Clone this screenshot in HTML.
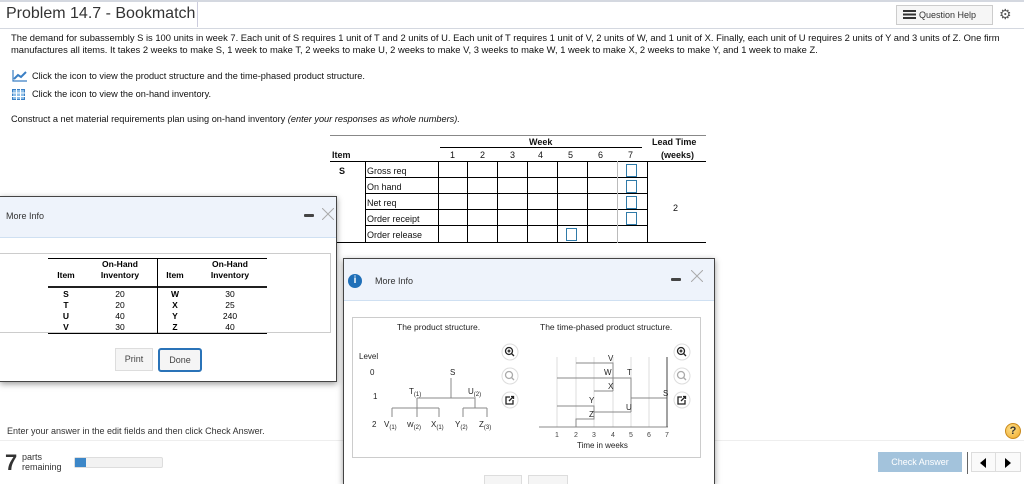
<!DOCTYPE html>
<html><head><meta charset="utf-8"><style>
*{margin:0;padding:0;box-sizing:border-box}
html,body{width:1024px;height:484px;overflow:hidden}
body{background:#fff;font-family:"Liberation Sans",sans-serif;color:#111;position:relative}
.a{position:absolute;white-space:nowrap}
.t{font-size:9px}
</style></head><body>
<div class="a" style="left:0;top:0;width:1024px;height:2px;background:#d4d8e0"></div>
<div class="a" style="left:6px;top:5px;font-size:16px;color:#333">Problem 14.7 - Bookmatch</div>
<div class="a" style="left:197px;top:2px;width:1px;height:25px;background:#ccd"></div>
<div class="a" style="left:0;top:28px;width:1024px;height:1px;background:#d4d8e0"></div>
<div class="a" style="left:896px;top:5px;width:97px;height:20px;border:1px solid #ccc;background:#f6f6f6;font-size:9px;padding:4px 0 0 6px;color:#333"><span style="display:inline-block;width:13px;height:9px;vertical-align:-1px;background:repeating-linear-gradient(#333 0 2px,transparent 2px 3.5px);margin-right:3px"></span>Question Help</div>
<div class="a" style="left:999px;top:6px;font-size:14px;color:#555">⚙</div>
<div class="a" style="left:11px;top:33px;font-size:9.38px">The demand for subassembly S is 100 units in week 7. Each unit of S requires 1 unit of T and 2 units of U. Each unit of T requires 1 unit of V, 2 units of W, and 1 unit of X. Finally, each unit of U requires 2 units of Y and 3 units of Z. One firm</div>
<div class="a" style="left:11px;top:45px;font-size:9.38px">manufactures all items. It takes 2 weeks to make S, 1 week to make T, 2 weeks to make U, 2 weeks to make V, 3 weeks to make W, 1 week to make X, 2 weeks to make Y, and 1 week to make Z.</div>
<svg class="a" style="left:12px;top:70px" width="16" height="12"><path d="M1 0V11H15" stroke="#3a7fc4" fill="none" stroke-width="1.2"/><path d="M2 9L6 5L9 7L14 2" stroke="#3a7fc4" fill="none" stroke-width="2"/></svg>
<div class="a" style="left:32px;top:71px;font-size:9.2px">Click the icon to view the product structure and the time-phased product structure.</div>
<svg class="a" style="left:12px;top:89px" width="13" height="11"><rect x="0.5" y="0.5" width="12" height="10" fill="#8ebfe8" stroke="#3a7fc4"/><path d="M0 4H13M0 7.5H13M4.5 0V11M8.5 0V11" stroke="#fff" stroke-width="1"/></svg>
<div class="a" style="left:32px;top:89px;font-size:9.2px">Click the icon to view the on-hand inventory.</div>
<div class="a" style="left:11px;top:114px;font-size:9.2px">Construct a net material requirements plan using on-hand inventory <i>(enter your responses as whole numbers).</i></div>

<div class="a" style="left:330px;top:135px;width:376px;height:1px;background:#888"></div>
<div class="a" style="left:529px;top:137px;font-size:9px;font-weight:bold">Week</div>
<div class="a" style="left:652px;top:137px;font-size:9px;font-weight:bold">Lead Time</div>
<div class="a" style="left:440px;top:147px;width:202px;height:1px;background:#000"></div>
<div class="a" style="left:332px;top:150px;font-size:9px;font-weight:bold">Item</div>
<div class="a" style="left:661px;top:150px;font-size:9px;font-weight:bold">(weeks)</div>
<div class="a" style="left:450px;top:150px;font-size:9px;width:200px">
<span class="a" style="left:0">1</span><span class="a" style="left:30px">2</span><span class="a" style="left:60px">3</span><span class="a" style="left:88px">4</span><span class="a" style="left:118px">5</span><span class="a" style="left:148px">6</span><span class="a" style="left:178px">7</span></div>
<div class="a" style="left:330px;top:161px;width:376px;height:1px;background:#000"></div>
<div class="a" style="left:330px;top:242px;width:376px;height:1px;background:#000"></div>
<div class="a" style="left:339px;top:166px;font-size:9px;font-weight:bold">S</div>
<div class="a" style="left:673px;top:203px;font-size:9px">2</div>
<svg class="a" style="left:365px;top:161px" width="283" height="82">
<g stroke="#000" stroke-width="1" fill="none">
<path d="M0.5 0V82M73.5 0V82M102.5 0V82M132.5 0V82M162.5 0V82M192.5 0V82M222.5 0V82M282.5 0V82"/>
<path d="M0 16.5H282M0 32.5H282M0 48.5H282M0 64.5H282"/>
</g>
<path d="M252.5 0V82" stroke="#bbb"/>
<g fill="#fff" stroke="#2f7aa8"><rect x="261.5" y="3.5" width="10" height="12"/><rect x="261.5" y="19.5" width="10" height="12"/><rect x="261.5" y="35.5" width="10" height="12"/><rect x="261.5" y="51.5" width="10" height="12"/><rect x="201.5" y="67.5" width="10" height="12"/></g>
</svg>
<div class="a t" style="left:367px;top:166px">Gross req</div>
<div class="a t" style="left:367px;top:182px">On hand</div>
<div class="a t" style="left:367px;top:198px">Net req</div>
<div class="a t" style="left:367px;top:214px">Order receipt</div>
<div class="a t" style="left:367px;top:230px">Order release</div>

<div class="a" style="left:7px;top:426px;font-size:9px;color:#333">Enter your answer in the edit fields and then click Check Answer.</div>
<div class="a" style="left:0;top:440px;width:1024px;height:1px;background:#eee"></div>
<div class="a" style="left:5px;top:450px;font-size:22px;font-weight:bold;color:#333">7</div>
<div class="a" style="left:22px;top:452px;font-size:9px;line-height:10px;color:#333">parts<br>remaining</div>
<div class="a" style="left:74px;top:457px;width:89px;height:11px;border:1px solid #ddd;border-radius:2px;background:#f2f2f2"><div style="width:11px;height:9px;background:#3c87c8"></div></div>
<div class="a" style="left:878px;top:452px;width:84px;height:20px;background:#a3c3dc;color:#fff;font-size:9px;text-align:center;line-height:20px">Check Answer</div>
<div class="a" style="left:967px;top:452px;width:1px;height:22px;background:#666"></div>
<div class="a" style="left:971px;top:452px;width:50px;height:20px;border:1px solid #ddd;background:#fafafa"></div>
<div class="a" style="left:995px;top:453px;width:1px;height:18px;background:#ddd"></div>
<svg class="a" style="left:977px;top:457px" width="40" height="12"><path d="M3 6L9 1V11Z M28 1V11L34 6Z" fill="#000"/></svg>
<div class="a" style="left:1005px;top:423px;width:16px;height:16px;border-radius:50%;background:radial-gradient(circle at 40% 35%,#fde08a,#f0a92a);border:1px solid #c98a1c;font-size:11px;font-weight:bold;text-align:center;line-height:14px;color:#333">?</div>

<div class="a" style="left:0;top:196px;width:337px;height:186px;background:#fff;border:1px solid #444;border-left:none;box-shadow:0 2px 6px rgba(0,0,0,.4)">
<div style="height:41px;background:#eef3fb;border-bottom:1px solid #cfe0f2"></div>
</div>
<div class="a" style="left:6px;top:211px;font-size:9px;color:#333">More Info</div>
<div class="a" style="left:304px;top:214px;width:10px;height:3px;background:#444;border-radius:1px"></div>
<svg class="a" style="left:322px;top:208px" width="12" height="12"><path d="M0 0L12 12M12 0L0 12" stroke="#aaa" stroke-width="1"/></svg>
<div class="a" style="left:0;top:253px;width:331px;height:80px;border:1px solid #ccc;border-left:none"></div>
<svg class="a" style="left:48px;top:258px" width="220" height="76" font-family="Liberation Sans" font-size="8.5" text-anchor="middle">
<path d="M0 .5H219M0 75.5H219" stroke="#000" stroke-width="1"/><path d="M0 29H219" stroke="#000" stroke-width="1.8"/>
<path d="M109.5 0V76" stroke="#000"/>
<g font-weight="bold"><text x="72" y="9">On-Hand</text><text x="72" y="20">Inventory</text><text x="18" y="20">Item</text><text x="182" y="9">On-Hand</text><text x="182" y="20">Inventory</text><text x="127" y="20">Item</text>
<text x="18" y="39">S</text><text x="18" y="50">T</text><text x="18" y="61">U</text><text x="18" y="72">V</text>
<text x="127" y="39">W</text><text x="127" y="50">X</text><text x="127" y="61">Y</text><text x="127" y="72">Z</text></g>
<text x="72" y="39">20</text><text x="72" y="50">20</text><text x="72" y="61">40</text><text x="72" y="72">30</text>
<text x="182" y="39">30</text><text x="182" y="50">25</text><text x="182" y="61">240</text><text x="182" y="72">40</text>
</svg>
<div class="a" style="left:115px;top:348px;width:38px;height:23px;border:1px solid #ddd;background:#f5f5f5;font-size:9px;color:#444;text-align:center;line-height:21px">Print</div>
<div class="a" style="left:158px;top:348px;width:44px;height:24px;border:2px solid #2a73b8;border-radius:3px;background:#f5f5f5;font-size:9px;color:#444;text-align:center;line-height:20px">Done</div>

<div class="a" style="left:343px;top:258px;width:372px;height:226px;background:#fff;border:1px solid #444;border-bottom:none;box-shadow:0 2px 6px rgba(0,0,0,.4);overflow:hidden">
<div style="height:42px;background:#eef3fb;border-bottom:1px solid #cfe0f2"></div>
<div class="a" style="left:140px;top:216px;width:38px;height:20px;border:1px solid #ddd;background:#f5f5f5"></div>
<div class="a" style="left:184px;top:216px;width:40px;height:20px;border:1px solid #ddd;background:#f5f5f5"></div>
</div>
<div class="a" style="left:348px;top:274px;width:14px;height:14px;border-radius:50%;background:#1f6fb8;color:#fff;font-size:10px;font-weight:bold;text-align:center;line-height:14px">i</div>
<div class="a" style="left:375px;top:276px;font-size:9px;color:#333">More Info</div>
<div class="a" style="left:671px;top:278px;width:10px;height:3px;background:#444;border-radius:1px"></div>
<svg class="a" style="left:691px;top:270px" width="12" height="12"><path d="M0 0L12 12M12 0L0 12" stroke="#aaa" stroke-width="1"/></svg>
<div class="a" style="left:352px;top:317px;width:349px;height:141px;border:1px solid #ccc"></div>
<svg class="a" style="left:352px;top:317px" width="350" height="141" font-family="Liberation Sans" font-size="8" fill="#222">
<text x="45" y="13" font-size="8.5">The product structure.</text>
<text x="188" y="13" font-size="8.5">The time-phased product structure.</text>
<text x="7" y="42">Level</text><text x="18" y="58">0</text><text x="21" y="82">1</text><text x="20" y="110">2</text>
<text x="98" y="58">S</text><text x="57" y="77">T<tspan font-size="6" dy="2">(1)</tspan></text><text x="116" y="77">U<tspan font-size="6" dy="2">(2)</tspan></text>
<text x="32" y="110">V<tspan font-size="6" dy="2">(1)</tspan></text><text x="55" y="110" font-size="7">W<tspan font-size="6" dy="2">(2)</tspan></text><text x="79" y="110">X<tspan font-size="6" dy="2">(1)</tspan></text><text x="103" y="110">Y<tspan font-size="6" dy="2">(2)</tspan></text><text x="127" y="110">Z<tspan font-size="6" dy="2">(3)</tspan></text>
<g stroke="#888" fill="none"><path d="M99 61V81M65 81H123M65 81V91M123 81V91M40 91H87M40 91V100M65 91V100M87 91V100M111 91H135M111 91V100M135 91V100"/></g>
<g stroke="#ddd"><path d="M205 40V110M224 40V110M242 40V110M261 40V110M279 40V110M297 40V110"/></g>
<g stroke="#888" fill="none"><path d="M187 110H316M224 46H261V74M205 61H279V95M242 74H261M279 81H315M205 89H242V102H224V110M242 95H279"/></g>
<path d="M315 40V110" stroke="#444"/>
<text x="256" y="44">V</text><text x="252" y="58">W</text><text x="275" y="58">T</text><text x="256" y="72">X</text><text x="311" y="79">S</text><text x="237" y="86">Y</text><text x="274" y="93">U</text><text x="237" y="100">Z</text>
<g font-size="7" fill="#444" text-anchor="middle"><text x="205" y="120">1</text><text x="224" y="120">2</text><text x="242" y="120">3</text><text x="261" y="120">4</text><text x="279" y="120">5</text><text x="297" y="120">6</text><text x="315" y="120">7</text></g>
<text x="225" y="131" font-size="8">Time in weeks</text>
<g fill="#fff" stroke="#ddd"><circle cx="158" cy="35" r="8"/><circle cx="158" cy="59" r="8"/><circle cx="158" cy="83" r="8"/><circle cx="330" cy="35" r="8"/><circle cx="330" cy="59" r="8"/><circle cx="330" cy="83" r="8"/></g>
<g fill="none" stroke="#222" stroke-width="1.3"><circle cx="157" cy="34" r="3.5"/><path d="M159.5 36.5L162 39M155.5 34H158.5M157 32.5V35.5"/><circle cx="329" cy="34" r="3.5"/><path d="M331.5 36.5L334 39M327.5 34H330.5M329 32.5V35.5"/><path d="M158 80H154V87H161V83M157 84L161 80M159 79.5H161.5V82"/><path d="M330 80H326V87H333V83M329 84L333 80M331 79.5H333.5V82"/></g>
<g fill="none" stroke="#aaa" stroke-width="1.3"><circle cx="157" cy="58" r="3.5"/><path d="M159.5 60.5L162 63"/><circle cx="329" cy="58" r="3.5"/><path d="M331.5 60.5L334 63"/></g>
</svg>
</body></html>
